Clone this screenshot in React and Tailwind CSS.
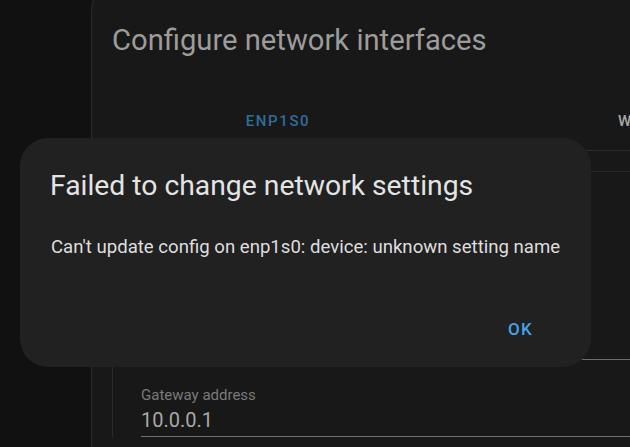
import React from "react";

function Field({ label, value }) {
  return (
    <div className="border-b border-[#6e6e6e] pb-[3px]">
      <p className="text-[15px] leading-[20px] text-[#7a7a7a]">{label}</p>
      <p className="mt-[2px] text-[20px] leading-[26px] text-[#a8a8a8]">{value}</p>
    </div>
  );
}

export default function App() {
  return (
    <div className="relative w-[630px] h-[447px] overflow-hidden bg-[#111111] font-['Roboto',sans-serif]">
      {/* Background dialog */}
      <div className="ml-[91px] -mt-[16px] w-[700px] h-[600px] rounded-tl-[26px] border border-[#2a2a2a] bg-[#181818]">
        <h1 className="pl-[20px] pt-[37px] text-[29.2px] leading-[36px] text-[#9c9c9c]">
          Configure network interfaces
        </h1>

        {/* Tabs */}
        <div className="mt-[44px] flex h-[49px] border-b border-[#2c2c2c]">
          <div className="w-[372px] pt-[9px] text-center text-[15px] leading-[20px] font-medium tracking-[1.6px] text-[#2f6d9d]">
            ENP1S0
          </div>
          <div className="pl-[154px] pt-[9px] text-[15px] leading-[20px] font-medium tracking-[1.25px] text-[#a8a8a8]">
            W
          </div>
        </div>

        {/* Interface card */}
        <div className="ml-[20px] mt-[20px] rounded-tl-[12px] border-t border-l border-[#2a2a2a] pl-[28px] pt-[136px]">
          <Field label="IP address" value="10.0.0.2/24" />
          <div className="mt-[25px]">
            <Field label="Gateway address" value="10.0.0.1" />
          </div>
        </div>
      </div>

      {/* Error dialog */}
      <div className="absolute left-[20px] top-[138px] w-[571px] h-[229px] rounded-[28px] bg-[#212121]">
        <h2 className="pl-[30px] pt-[30px] text-[28.3px] leading-[36px] text-[#e4e4e4]">
          Failed to change network settings
        </h2>
        <p className="pl-[31px] mt-[31px] text-[18.6px] leading-[24px] text-[#dedede]">
          Can't update config on enp1s0: device: unknown setting name
        </p>
        <div className="mt-[58px] flex justify-end pr-[46px]">
          <button className="px-[12px] text-[17px] leading-[24px] font-medium tracking-[1.25px] text-[#48a2eb]">
            OK
          </button>
        </div>
      </div>
    </div>
  );
}
